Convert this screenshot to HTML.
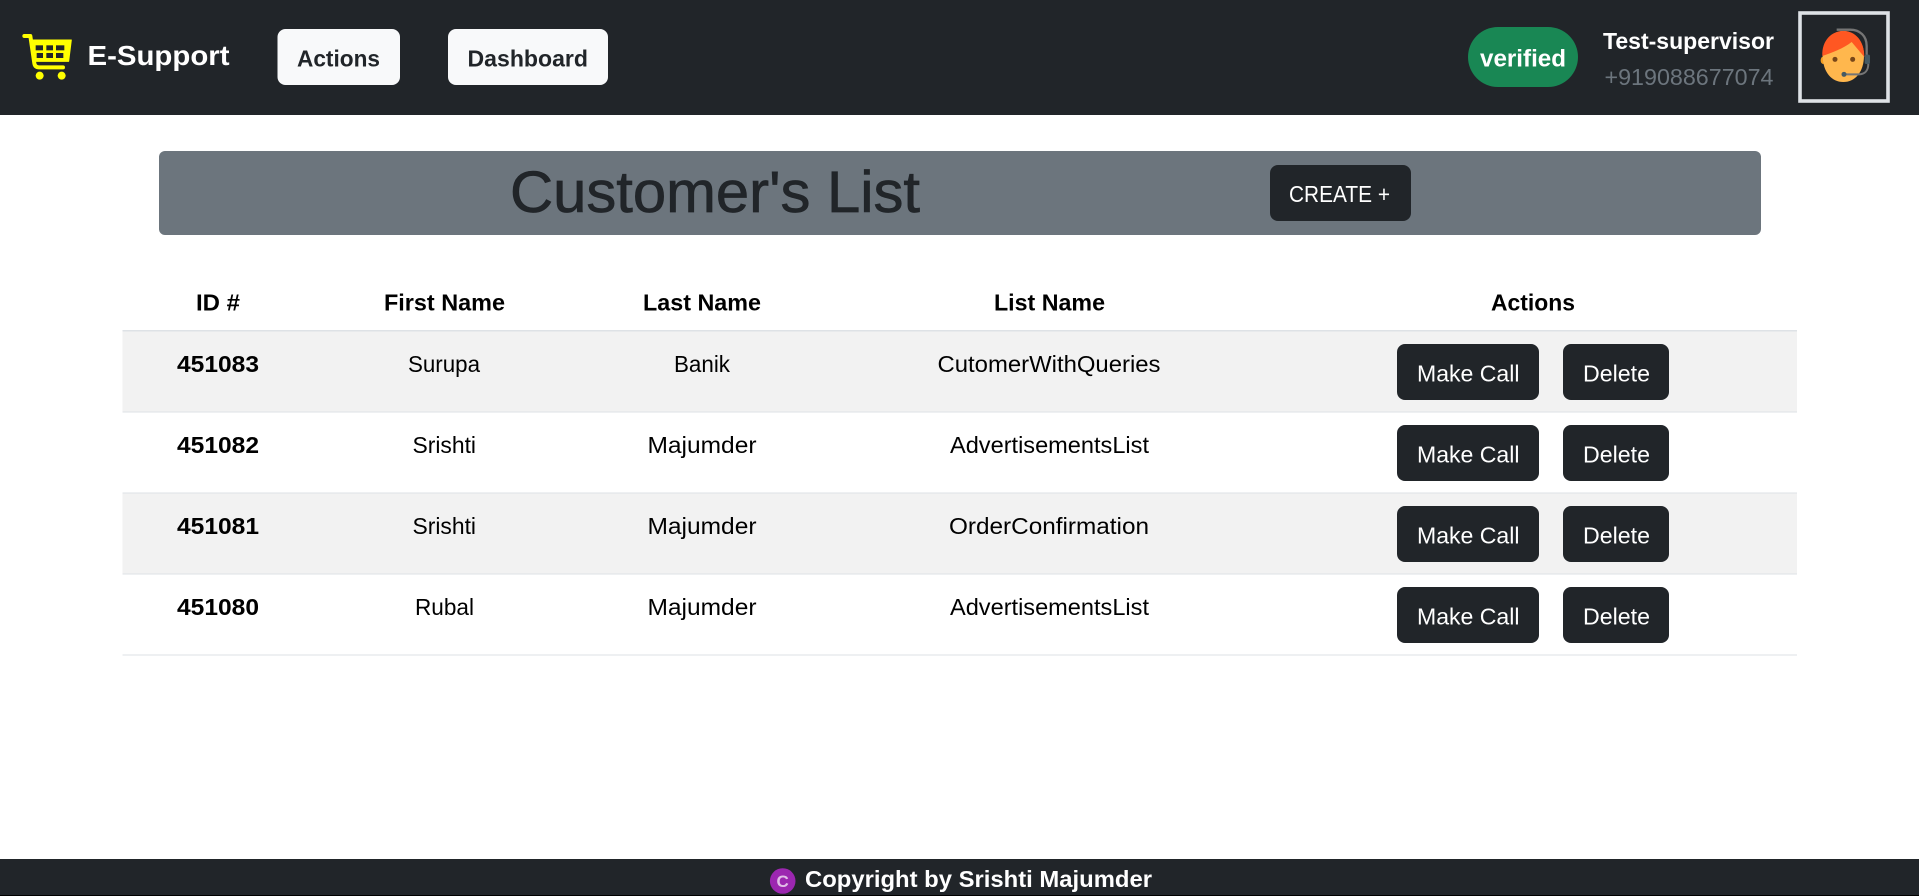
<!DOCTYPE html>
<html lang="en">
<head>
<meta charset="utf-8">
<title>Customer's List</title>
<style>
html,body{margin:0;padding:0;background:#fff;width:1919px;height:896px;overflow:hidden}
svg{display:block}
text{font-family:"Liberation Sans",Arial,sans-serif;font-size:23px;white-space:pre}
.b{font-weight:700}
</style>
</head>
<body>
<svg width="1919" height="896" viewBox="0 0 1919 896" xmlns="http://www.w3.org/2000/svg">
<!-- navbar -->
<rect x="0" y="0" width="1919" height="115" fill="#212529"/>
<g transform="translate(18,30) scale(.3333)">
  <path d="M38 30H160L152 94H48Z" fill="#ff0" stroke="#ff0" stroke-width="3" stroke-linejoin="round"/>
  <g fill="#212529">
    <rect x="53" y="46" width="22" height="15"/><rect x="85" y="46" width="20" height="15"/><rect x="114" y="46" width="25" height="15"/>
    <rect x="56" y="69" width="19" height="15"/><rect x="85" y="69" width="20" height="15"/><rect x="114" y="69" width="22" height="15"/>
  </g>
  <path d="M19 18H37L49 100Q51 112 63 112H135" fill="none" stroke="#ff0" stroke-width="12" stroke-linecap="round" stroke-linejoin="round"/>
  <circle cx="65" cy="137" r="12" fill="#ff0"/><circle cx="131" cy="137" r="12" fill="#ff0"/>
</g>
<text class="b" x="87.5" y="65" style="font-size:28px" fill="#fff" textLength="142" lengthAdjust="spacingAndGlyphs">E-Support</text>
<rect x="277.5" y="29" width="122.5" height="56" rx="8" fill="#f8f9fa"/>
<text class="b" x="297" y="66.5" fill="#212529" textLength="83" lengthAdjust="spacingAndGlyphs">Actions</text>
<rect x="448" y="29" width="160" height="56" rx="8" fill="#f8f9fa"/>
<text class="b" x="467.5" y="66.5" fill="#212529" textLength="120.5" lengthAdjust="spacingAndGlyphs">Dashboard</text>
<rect x="1468" y="27" width="110" height="60" rx="30" fill="#198754"/>
<text class="b" x="1480" y="66.5" fill="#fff" style="font-size:24px" textLength="86" lengthAdjust="spacingAndGlyphs">verified</text>
<text class="b" x="1603" y="49" fill="#fff" textLength="171" lengthAdjust="spacingAndGlyphs">Test-supervisor</text>
<text x="1604.5" y="85" fill="#6c757d" textLength="169" lengthAdjust="spacingAndGlyphs">+919088677074</text>
<rect x="1800" y="13" width="88" height="88" fill="none" stroke="#dee2e6" stroke-width="3.6"/>
<g transform="translate(1815,22) scale(.3333)">
  <ellipse cx="24" cy="115" rx="7" ry="11" fill="#f59e22"/>
  <path d="M23 100C23 150 50 180 85 180C120 180 147 150 147 100C147 60 120 27 85 27C50 27 23 60 23 100Z" fill="#ffb74d"/>
  <path d="M22 102C20 55 50 27 85 27C120 27 148 55 148 105L110 60C85 80 50 92 22 102Z" fill="#ff5722"/>
  <circle cx="60" cy="112" r="7.5" fill="#784719"/><circle cx="113" cy="112" r="7.5" fill="#784719"/>
  <path d="M65 23H105C135 23 155 42 155 72V100" fill="none" stroke="#757575" stroke-width="7"/>
  <path d="M160 125C160 145 150 157 132 157H92" fill="none" stroke="#757575" stroke-width="6"/>
  <rect x="149" y="98" width="16" height="28" rx="5" fill="#455a64"/>
  <circle cx="87" cy="157" r="7.5" fill="#455a64"/>
</g>
<!-- title -->
<rect x="159" y="151" width="1602" height="84" rx="6" fill="#6c757d"/>
<text x="510" y="212" fill="#212529" stroke="#212529" stroke-width=".7" style="font-size:58px" textLength="410" lengthAdjust="spacingAndGlyphs">Customer's List</text>
<rect x="1270" y="165" width="141" height="56" rx="8" fill="#212529"/>
<text x="1289" y="202" fill="#fff" textLength="101" lengthAdjust="spacingAndGlyphs">CREATE +</text>
<!-- table -->
<rect x="122.5" y="331" width="1674.5" height="81" fill="#f2f2f2"/>
<rect x="122.5" y="493" width="1674.5" height="81" fill="#f2f2f2"/>
<g fill="#dee2e6">
  <rect x="122.5" y="330" width="1674.5" height="1.5"/>
  <rect x="122.5" y="411.5" width="1674.5" height="1"/>
  <rect x="122.5" y="492.5" width="1674.5" height="1"/>
  <rect x="122.5" y="573.5" width="1674.5" height="1"/>
  <rect x="122.5" y="654.5" width="1674.5" height="1"/>
</g>
<g class="b" fill="#000" style="font-weight:700">
  <text x="196" y="310.5" textLength="44" lengthAdjust="spacingAndGlyphs">ID #</text>
  <text x="384" y="310.5" textLength="121" lengthAdjust="spacingAndGlyphs">First Name</text>
  <text x="643" y="310.5" textLength="118" lengthAdjust="spacingAndGlyphs">Last Name</text>
  <text x="994" y="310.5" textLength="111" lengthAdjust="spacingAndGlyphs">List Name</text>
  <text x="1491" y="310.5" textLength="84" lengthAdjust="spacingAndGlyphs">Actions</text>
  <text x="177" y="372" textLength="82" lengthAdjust="spacingAndGlyphs">451083</text>
  <text x="177" y="453" textLength="82" lengthAdjust="spacingAndGlyphs">451082</text>
  <text x="177" y="534" textLength="82" lengthAdjust="spacingAndGlyphs">451081</text>
  <text x="177" y="615" textLength="82" lengthAdjust="spacingAndGlyphs">451080</text>
</g>
<g fill="#000">
  <text x="408" y="372" textLength="72" lengthAdjust="spacingAndGlyphs">Surupa</text>
  <text x="674" y="372" textLength="56" lengthAdjust="spacingAndGlyphs">Banik</text>
  <text x="937.5" y="372" textLength="223" lengthAdjust="spacingAndGlyphs">CutomerWithQueries</text>
  <text x="412.5" y="453" textLength="63.5" lengthAdjust="spacingAndGlyphs">Srishti</text>
  <text x="647.5" y="453" textLength="109" lengthAdjust="spacingAndGlyphs">Majumder</text>
  <text x="950" y="453" textLength="199" lengthAdjust="spacingAndGlyphs">AdvertisementsList</text>
  <text x="412.5" y="534" textLength="63.5" lengthAdjust="spacingAndGlyphs">Srishti</text>
  <text x="647.5" y="534" textLength="109" lengthAdjust="spacingAndGlyphs">Majumder</text>
  <text x="949" y="534" textLength="200" lengthAdjust="spacingAndGlyphs">OrderConfirmation</text>
  <text x="415" y="615" textLength="59" lengthAdjust="spacingAndGlyphs">Rubal</text>
  <text x="647.5" y="615" textLength="109" lengthAdjust="spacingAndGlyphs">Majumder</text>
  <text x="950" y="615" textLength="199" lengthAdjust="spacingAndGlyphs">AdvertisementsList</text>
</g>
<g fill="#212529">
  <rect x="1397" y="344" width="142" height="56" rx="8"/><rect x="1563" y="344" width="106" height="56" rx="8"/>
  <rect x="1397" y="425" width="142" height="56" rx="8"/><rect x="1563" y="425" width="106" height="56" rx="8"/>
  <rect x="1397" y="506" width="142" height="56" rx="8"/><rect x="1563" y="506" width="106" height="56" rx="8"/>
  <rect x="1397" y="587" width="142" height="56" rx="8"/><rect x="1563" y="587" width="106" height="56" rx="8"/>
</g>
<g fill="#fff">
  <text x="1417" y="381.5" textLength="102.5" lengthAdjust="spacingAndGlyphs">Make Call</text>
  <text x="1583" y="381.5" textLength="67" lengthAdjust="spacingAndGlyphs">Delete</text>
  <text x="1417" y="462.5" textLength="102.5" lengthAdjust="spacingAndGlyphs">Make Call</text>
  <text x="1583" y="462.5" textLength="67" lengthAdjust="spacingAndGlyphs">Delete</text>
  <text x="1417" y="543.5" textLength="102.5" lengthAdjust="spacingAndGlyphs">Make Call</text>
  <text x="1583" y="543.5" textLength="67" lengthAdjust="spacingAndGlyphs">Delete</text>
  <text x="1417" y="624.5" textLength="102.5" lengthAdjust="spacingAndGlyphs">Make Call</text>
  <text x="1583" y="624.5" textLength="67" lengthAdjust="spacingAndGlyphs">Delete</text>
</g>
<!-- footer -->
<rect x="0" y="859" width="1919" height="37" fill="#212529"/>
<rect x="0" y="895" width="1919" height="1" fill="#000"/>
<circle cx="782.7" cy="881" r="12.8" fill="#9c27b0"/>
<text class="b" x="782.7" y="887" fill="#e1bee7" text-anchor="middle" style="font-size:17px">C</text>
<text class="b" x="805" y="887" fill="#fff" textLength="347" lengthAdjust="spacingAndGlyphs">Copyright by Srishti Majumder</text>
</svg>
</body>
</html>
